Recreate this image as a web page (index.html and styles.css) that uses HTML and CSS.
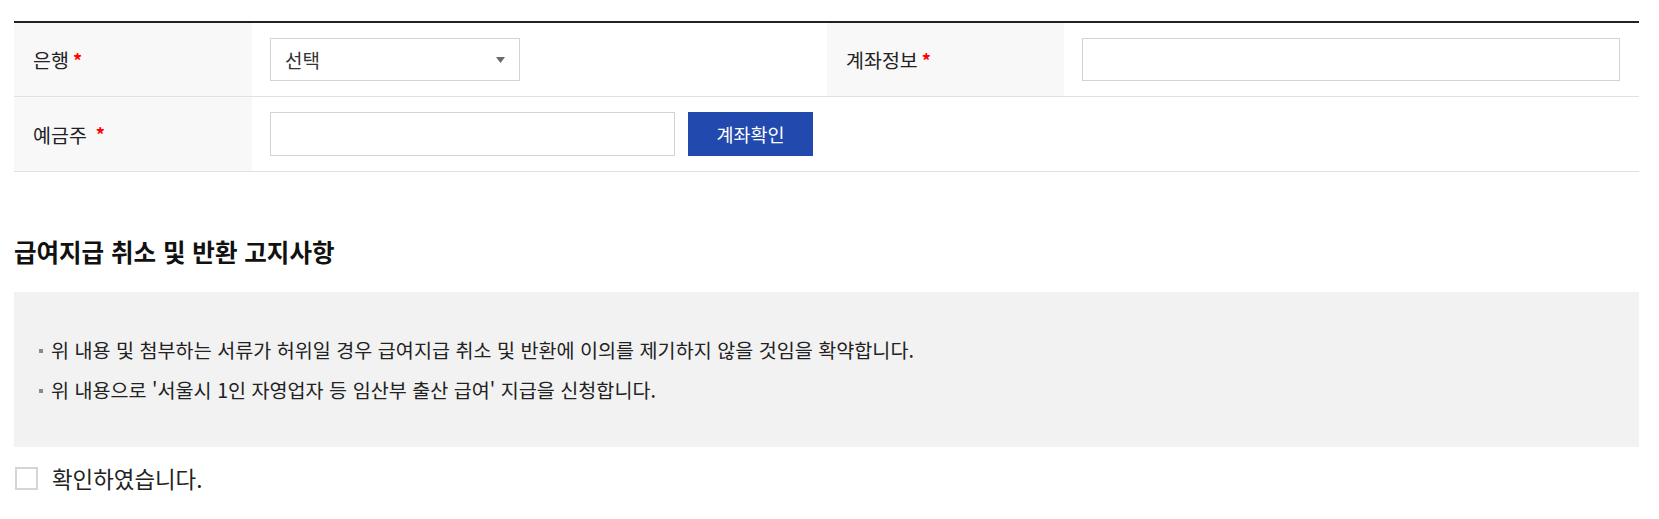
FILE: index.html
```html
<!DOCTYPE html>
<html lang="ko">
<head>
<meta charset="utf-8">
<title>계좌정보</title>
<link rel="stylesheet" href="styles.css">
</head>
<body>
<div class="page">
  <div class="form-table">
    <div class="row">
      <div class="label"><span>은행</span><span class="req">*</span></div>
      <div class="value">
        <div class="select">
          <span>선택</span>
          <svg class="arrow" width="9" height="6" viewBox="0 0 9 6"><path d="M0 0H9L4.5 6Z" fill="#6e6964"/></svg>
        </div>
      </div>
      <div class="label"><span>계좌정보</span><span class="req">*</span></div>
      <div class="value"><div class="input input-full"></div></div>
    </div>
    <div class="row">
      <div class="label"><span>예금주</span><span class="req req-gap">*</span></div>
      <div class="value value-wide">
        <div class="input input-owner"></div>
        <button class="btn" type="button">계좌확인</button>
      </div>
    </div>
  </div>

  <h2 class="title">급여지급 취소 및 반환 고지사항</h2>

  <div class="notice">
    <ul class="notice-list">
      <li>위 내용 및 첨부하는 서류가 허위일 경우 급여지급 취소 및 반환에 이의를 제기하지 않을 것임을 확약합니다.</li>
      <li>위 내용으로 '서울시 1인 자영업자 등 임산부 출산 급여' 지급을 신청합니다.</li>
    </ul>
  </div>

  <label class="agree">
    <span class="checkbox"></span>
    <span class="agree-text">확인하였습니다.</span>
  </label>
</div>
</body>
</html>
```
FILE: styles.css
```css
* { box-sizing: border-box; }
html, body { margin: 0; padding: 0; background: #fff; }
body {
  font-family: "Noto Sans CJK KR", "Noto Sans", sans-serif;
  color: #222;
}
.page {
  padding: 21px 20px 0 14px;
}
.form-table {
  border-top: 2px solid #222;
}
.row {
  display: grid;
  grid-template-columns: 238px 1fr 237px 1fr;
  border-bottom: 1px solid #e1e1e1;
  height: 74px;
}
.row + .row { height: 75px; }
.label {
  background: #f8f8f8;
  display: flex;
  align-items: center;
  padding-left: 19px;
  font-size: 19.5px;
  color: #222;
}
.req {
  color: #f00;
  font-size: 18px;
  font-weight: 700;
  margin-left: 4px;
}
.req-gap { margin-left: 9px; }
.value {
  display: flex;
  align-items: center;
  padding: 0 19px 0 18px;
}
.value-wide {
  grid-column: 2 / 5;
  gap: 13px;
}
.select {
  width: 250px;
  height: 43px;
  border: 1px solid #d3d3d3;
  display: flex;
  align-items: center;
  justify-content: space-between;
  padding: 0 14px 0 14px;
  font-size: 19px;
  color: #333;
  background: #fff;
}
.arrow { display: block; margin-top: 1px; }
.input {
  height: 43px;
  border: 1px solid #d3d3d3;
  background: #fff;
}
.input-full { width: 100%; }
.input-owner { width: 405px; height: 44px; }
.btn {
  width: 125px;
  height: 44px;
  border: 0;
  background: #2249ad;
  color: #fff;
  font-family: inherit;
  font-size: 18.5px;
  padding: 0;
}
.title {
  margin: 65px 0 0;
  font-size: 24.5px;
  font-weight: 700;
  line-height: 30px;
  color: #111;
}
.notice {
  margin-top: 25px;
  background: #f2f2f2;
  padding: 38px 25px 37px;
}
.notice-list {
  list-style: none;
  margin: 0;
  padding: 0;
}
.notice-list li {
  position: relative;
  padding-left: 12px;
  font-size: 19.6px;
  line-height: 40px;
  color: #222;
}
.notice-list li::before {
  content: "";
  position: absolute;
  left: 0;
  top: 19px;
  width: 4px;
  height: 4px;
  background: #888;
}
.agree {
  display: flex;
  align-items: center;
  margin-top: 16px;
  height: 30px;
}
.checkbox {
  width: 23px;
  height: 23px;
  border: 2px solid #d5d5d5;
  background: #fff;
  margin-left: 1px;
}
.agree-text {
  margin-left: 14px;
  font-size: 22.4px;
  color: #222;
}
```
